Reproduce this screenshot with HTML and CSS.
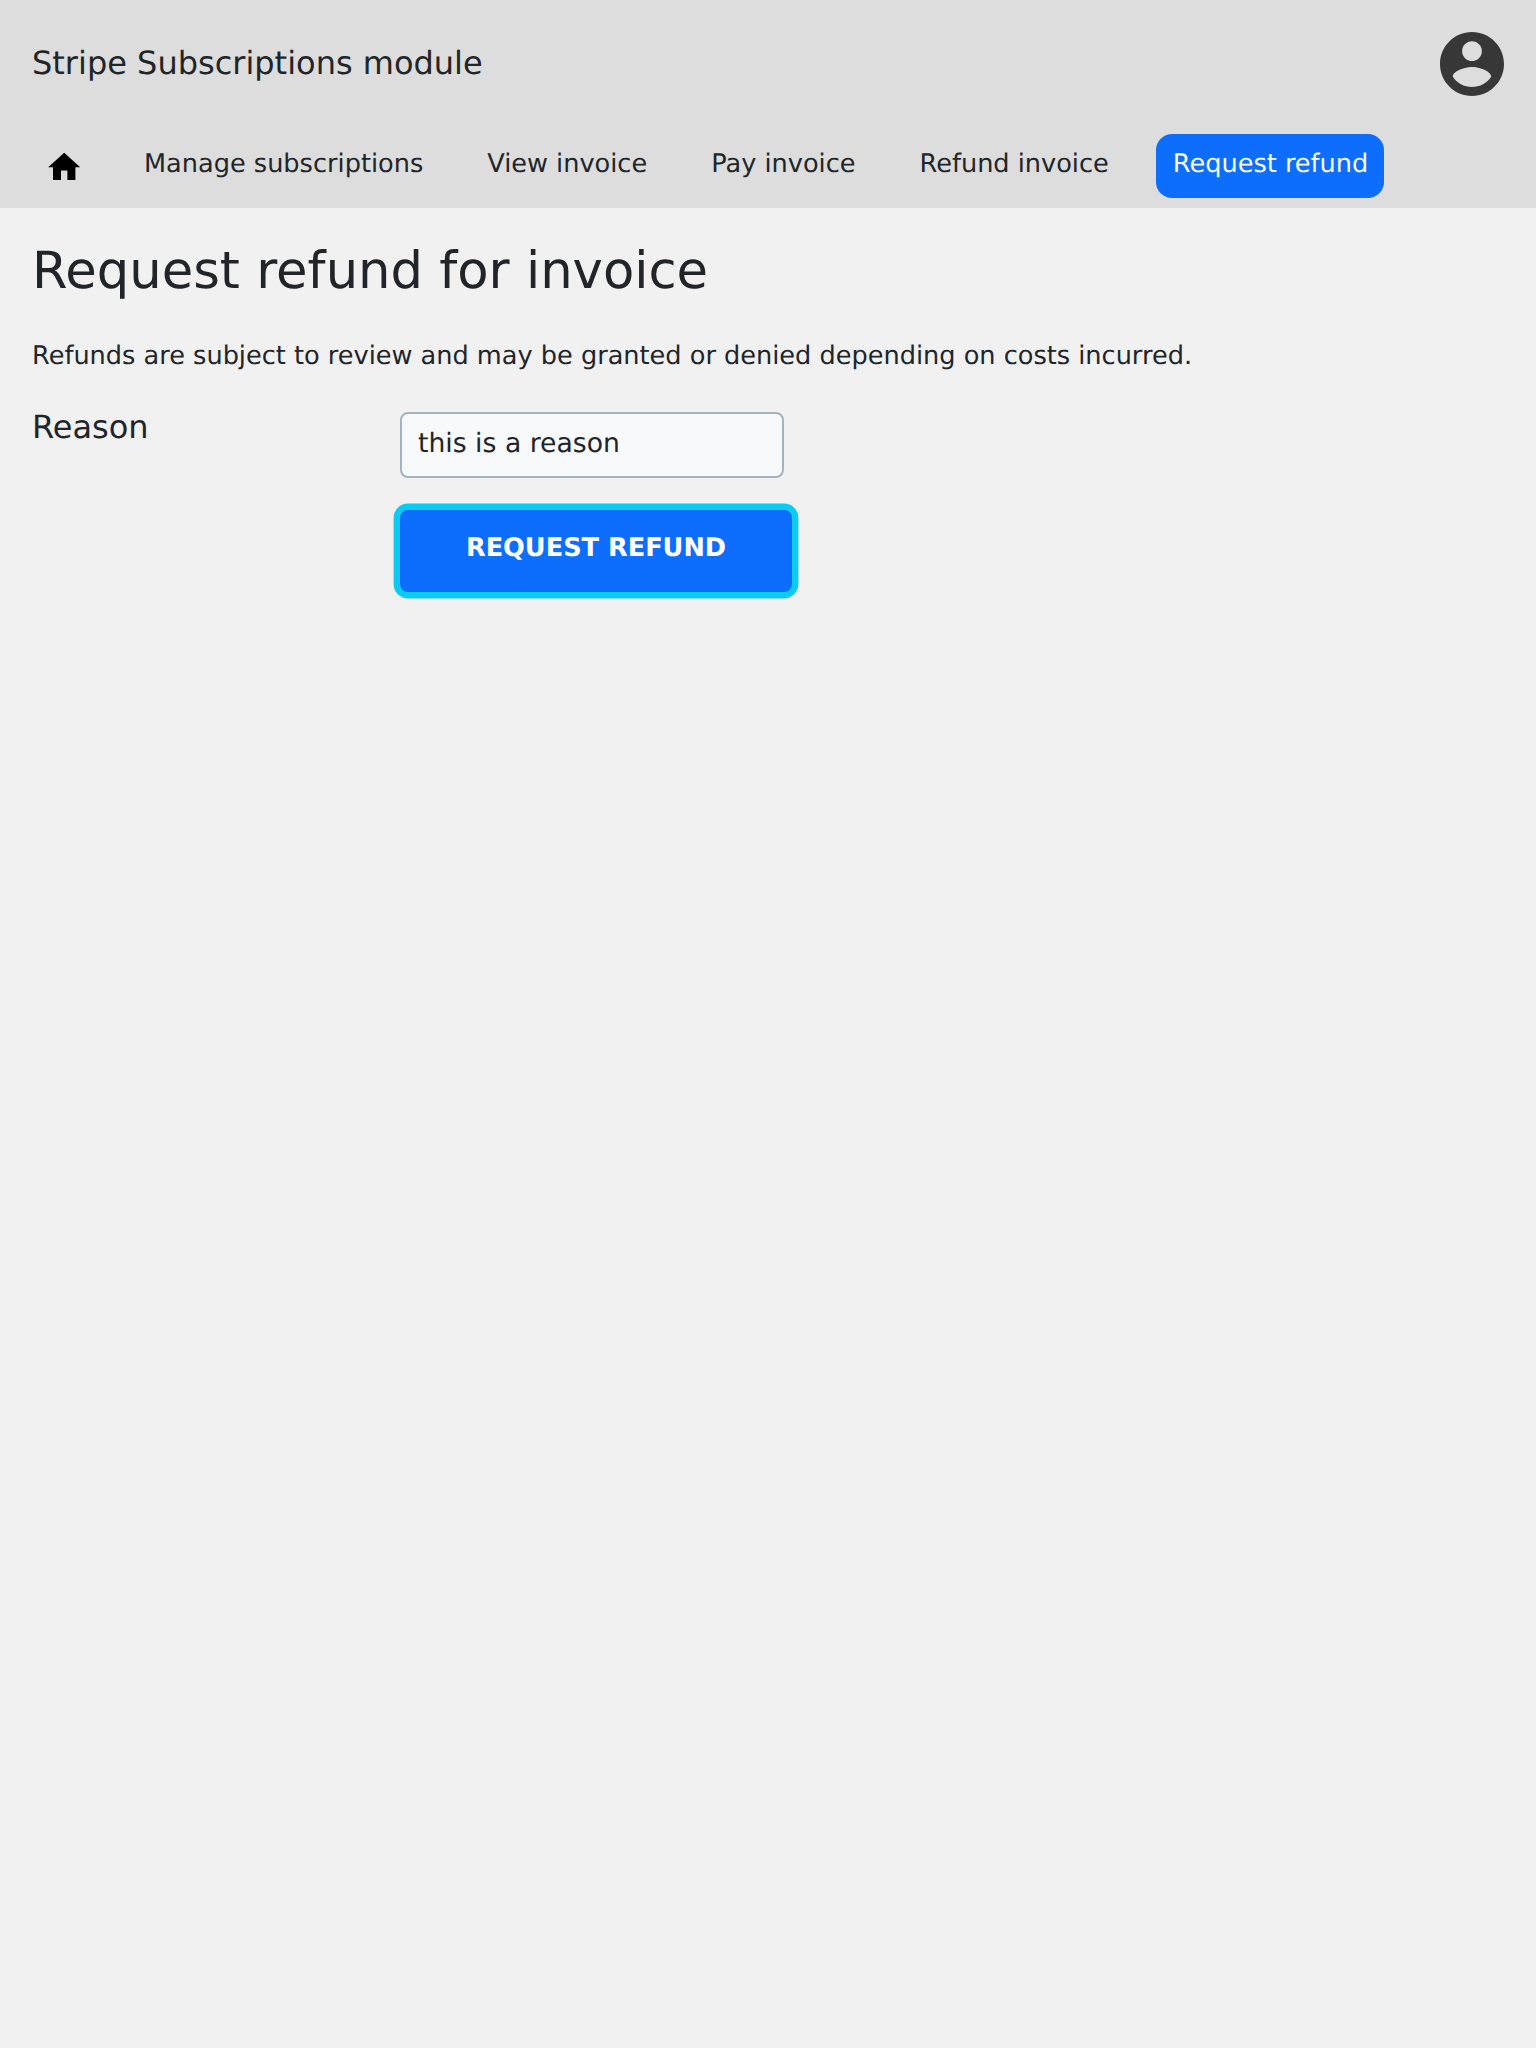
FILE: index.html
```html
<!DOCTYPE html>
<html lang="en">
<head>
<meta charset="utf-8">
<title>Request refund</title>
<link rel="stylesheet" href="styles.css">
</head>
<body>
<header class="header">
  <div class="topbar">
    <div class="title">Stripe Subscriptions module</div>
    <svg class="account" viewBox="2 2 20 20"><path d="M12 2C6.48 2 2 6.48 2 12s4.48 10 10 10 10-4.48 10-10S17.52 2 12 2zm0 2.900c1.700 0 3.080 1.380 3.080 3.080s-1.380 3.080-3.080 3.080-3.080-1.380-3.080-3.080 1.380-3.080 3.080-3.080zm0 14.300c-2.500 0-4.710-1.280-6-3.220.03-1.990 4-3.080 6-3.080 1.990 0 5.970 1.090 6 3.080-1.290 1.940-3.500 3.220-6 3.220z"/></svg>
  </div>
  <nav class="nav">
    <a class="item home"><svg class="house" viewBox="0 0 24 24"><path d="M10 20v-6h4v6h5v-8h3L12 3 2 12h3v8z"/></svg></a>
    <a class="item">Manage subscriptions</a>
    <a class="item">View invoice</a>
    <a class="item">Pay invoice</a>
    <a class="item">Refund invoice</a>
    <a class="item active">Request refund</a>
  </nav>
</header>
<main class="content">
  <h1 class="heading">Request refund for invoice</h1>
  <p class="note">Refunds are subject to review and may be granted or denied depending on costs incurred.</p>
  <form class="form">
    <label class="label" for="reason">Reason</label>
    <div class="fields">
      <input class="input" id="reason" type="text" value="this is a reason">
      <button class="button" type="button">REQUEST REFUND</button>
    </div>
  </form>
</main>
</body>
</html>
```
FILE: styles.css
```css
* { box-sizing: border-box; }
body {
  margin: 0;
  min-height: 2048px;
  background: #f1f1f1;
  color: #212529;
  font-family: "DejaVu Sans", sans-serif;
  font-size: 25.6px;
  text-rendering: geometricPrecision;
}
.header { height: 208px; background: #ddd; }
.topbar {
  display: flex;
  justify-content: space-between;
  height: 134px;
  padding: 32px 32px 0;
}
.title { font-size: 32px; line-height: 62px; }
.account { width: 64px; height: 64px; fill: #373737; }
.nav { display: flex; gap: 32px; padding-left: 32px; }
.item {
  height: 64px;
  padding: 0 16px;
  border-radius: 16px;
  line-height: 60px;
  white-space: nowrap;
}
.home { width: 64px; padding: 13.6px 0 0 12.8px; line-height: 0; }
.house { width: 38.4px; height: 38.4px; fill: #000; }
.active {
  margin-left: -0.6px;
  padding-left: 16.6px;
  background: #0d6efd;
  color: #f8f9fa;
}
.content { padding: 33px 32px 32px; }
.heading { margin: 0; font-size: 51.2px; font-weight: 400; line-height: 61px; }
.note { margin: 35px 0 0; line-height: 38px; }
.form { display: grid; grid-template-columns: 368px 392px; margin-top: 37px; }
.label { font-size: 32px; line-height: 30px; }
.fields { display: flex; flex-direction: column; align-items: flex-start; gap: 32px; }
.input,
.button { text-rendering: geometricPrecision; }
.input {
  width: 384px;
  height: 66px;
  padding: 0 16px 4px;
  border: 2px solid #a5b3c1;
  border-radius: 8px;
  background: #f8f9fa;
  color: #212529;
  font: 26.667px "DejaVu Sans", sans-serif;
}
.button {
  width: 392px;
  height: 82px;
  padding: 0 0 6px;
  border: 0;
  border-radius: 8px;
  background: #0d6efd;
  color: #fff;
  box-shadow: 0 0 0 6.4px #0dcaf0;
  font: bold 25.6px "DejaVu Sans", sans-serif;
}
```
